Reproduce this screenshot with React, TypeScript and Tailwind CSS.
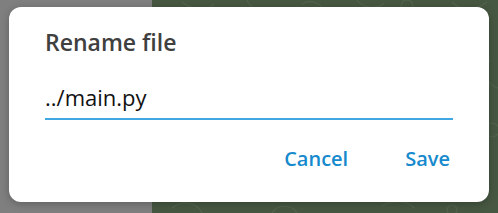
import React from "react";

function Doodles() {
  return (
    <svg className="absolute inset-0 h-full w-full" viewBox="0 0 346 213" fill="none" stroke="#53634c" strokeWidth="1.2">
      <path d="M30 2 C40 10 55 12 62 4" />
      <path d="M95 0 C98 8 110 14 120 10" />
      <path d="M150 4 C160 -2 175 6 170 14 C165 22 150 16 158 8" />
      <path d="M205 0 C210 8 225 10 232 3" />
      <circle cx="255" cy="6" r="6" />
      <path d="M300 2 C310 12 325 10 335 2" />
      <path d="M338 60 C330 70 334 85 346 88" />
      <circle cx="340" cy="130" r="7" />
      <path d="M20 208 C30 200 45 202 50 213" />
      <path d="M120 213 C125 204 140 204 145 213" />
      <path d="M230 206 C240 200 255 200 262 208" />
      <circle cx="300" cy="210" r="5" />
    </svg>
  );
}

export default function App() {
  return (
    <div className="relative flex h-[213px] w-[498px] overflow-hidden" style={{ fontFamily: '"Open Sans", "Noto Sans", sans-serif' }}>
      <div className="h-full w-[152px] bg-[#7f7f7f]" />
      <div className="relative h-full flex-1 bg-[#475842]">
        <Doodles />
      </div>

      <div className="absolute left-[9px] top-[7px] flex h-[195px] w-[480px] flex-col rounded-[12px] bg-white px-[36px] pt-[20px] shadow-[0_2px_8px_rgba(0,0,0,0.25)]">
        <div className="text-[23px] font-semibold leading-[31px] text-[#404040]">Rename file</div>
        <div className="mt-[25px] border-b-2 border-[#40a7e3] pb-[7px]">
          <input
            className="block h-[28px] w-full bg-transparent p-0 text-[22px] leading-[28px] text-[#111] outline-none"
            defaultValue="../main.py"
          />
        </div>
        <div className="mt-[25px] flex justify-end gap-[57px] pr-[3px]">
          <button className="text-[20px] font-semibold leading-[28px] text-[#168acd]">Cancel</button>
          <button className="text-[20px] font-semibold leading-[28px] text-[#168acd]">Save</button>
        </div>
      </div>
    </div>
  );
}
